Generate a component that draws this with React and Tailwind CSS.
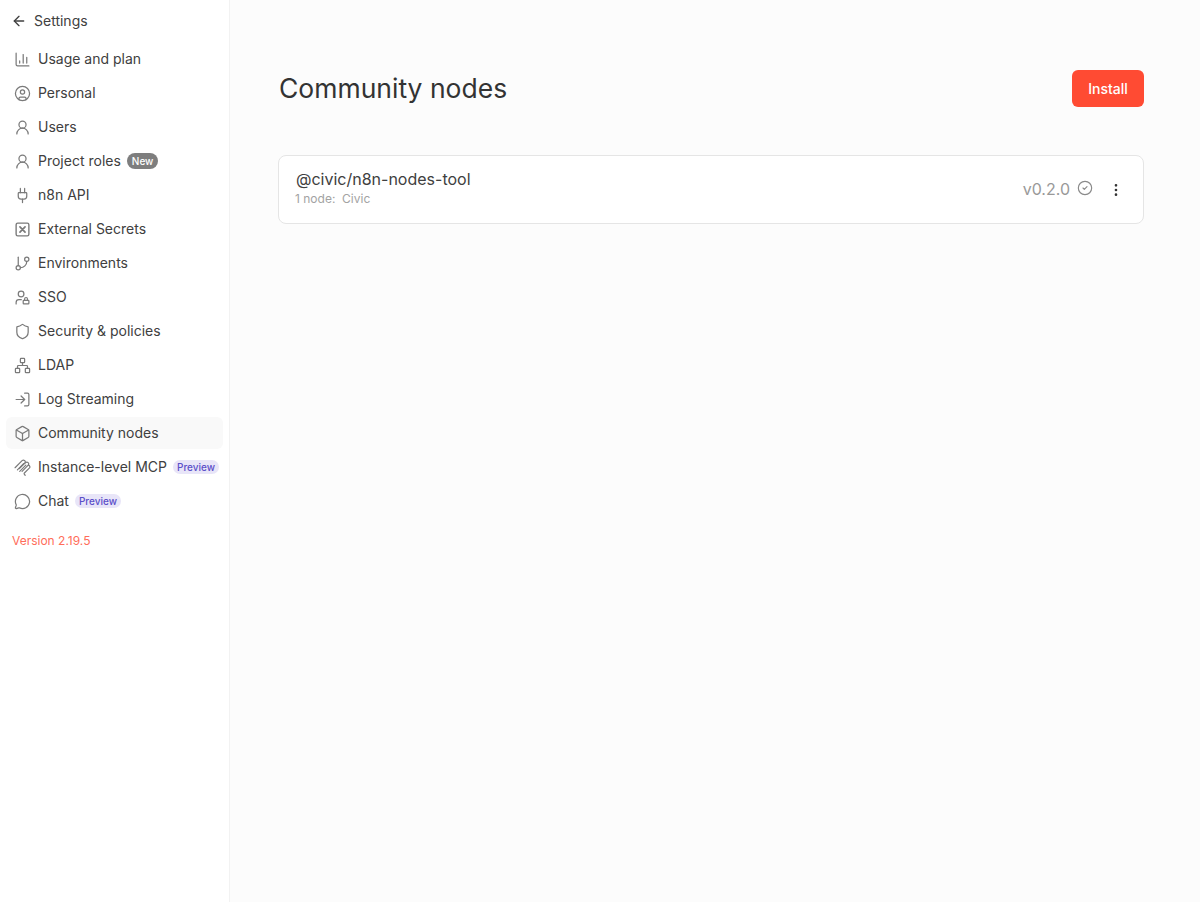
import {
  ArrowLeft,
  ChartColumn,
  CircleUser,
  UserRound,
  Plug,
  GitBranch,
  UserLock,
  Shield,
  Network,
  LogIn,
  Box,
  MessageCircle,
  CircleCheck,
  EllipsisVertical,
} from "lucide-react";

function McpIcon(props) {
  return (
    <svg viewBox="0 0 16 16" fill="none" stroke="currentColor" strokeWidth="1.1" strokeLinecap="round" strokeLinejoin="round" className={props.className}>
      <path d="M1 8.2 7.6 1.6a1.7 1.7 0 0 1 2.5 2.4L5 9.1" />
      <path d="M10.1 4 11 3.4a1.7 1.7 0 0 1 2.4 2.4L7.6 11.6" />
      <path d="M13.4 5.8a1.6 1.6 0 0 1 1.2 2.6L9.8 13.2a.9.9 0 0 0 0 1.3l.7.8" />
      <path d="M3.2 10.2 9 4.4M5.4 11.6l5.8-5.8" />
    </svg>
  );
}

function SecretsIcon(props) {
  return (
    <svg viewBox="0 0 16 16" fill="none" stroke="currentColor" strokeLinecap="round" className={props.className}>
      <rect x="2" y="2" width="12" height="12" rx="1.5" strokeWidth="1.3" />
      <path d="M5.6 5.6l4.8 4.8M10.4 5.6l-4.8 4.8" strokeWidth="1.6" />
    </svg>
  );
}

const items = [
  { label: "Usage and plan", icon: ChartColumn },
  { label: "Personal", icon: CircleUser },
  { label: "Users", icon: UserRound },
  { label: "Project roles", icon: UserRound, badge: "New" },
  { label: "n8n API", icon: Plug },
  { label: "External Secrets", icon: SecretsIcon },
  { label: "Environments", icon: GitBranch },
  { label: "SSO", icon: UserLock },
  { label: "Security & policies", icon: Shield },
  { label: "LDAP", icon: Network },
  { label: "Log Streaming", icon: LogIn },
  { label: "Community nodes", icon: Box, active: true },
  { label: "Instance-level MCP", icon: McpIcon, preview: true },
  { label: "Chat", icon: MessageCircle, preview: true },
];

function NavItem({ item }) {
  const Icon = item.icon;
  return (
    <div
      className={
        "flex h-8 items-center rounded-md pl-2 " +
        (item.active ? "bg-[#f9f9f9]" : "")
      }
    >
      <Icon className="h-[17px] w-[17px] shrink-0 text-[#7a7a7a]" strokeWidth={1.75} />
      <span className="ml-[7px] text-sm text-[#404040]">{item.label}</span>
      {item.badge && (
        <span className="ml-1.5 flex h-4 items-center rounded-full bg-[#7e7e7e] px-[5px] text-[10px] font-medium text-white">
          {item.badge}
        </span>
      )}
      {item.preview && (
        <span className="ml-1.5 flex h-3.5 items-center rounded-full bg-[#e8e5f8] px-1 text-[10px] font-medium text-[#5b4fc9]">
          Preview
        </span>
      )}
    </div>
  );
}

export default function App() {
  return (
    <div className="flex h-[902px] w-[1200px] overflow-hidden bg-[#fcfcfc] font-['Inter',sans-serif]">
      <aside className="flex w-[230px] shrink-0 flex-col border-r border-[#f2f2f2] bg-white px-1.5">
        <div className="flex h-[43px] items-center pb-[2px] pl-[5px]">
          <ArrowLeft className="h-4 w-4 text-[#404040]" strokeWidth={2} />
          <span className="ml-[7px] text-sm text-[#404040]">Settings</span>
        </div>
        <nav className="flex flex-col gap-0.5">
          {items.map((item) => (
            <NavItem key={item.label} item={item} />
          ))}
        </nav>
        <p className="mt-4 pl-1.5 text-xs text-[#ff6d5a]">Version 2.19.5</p>
      </aside>

      <main className="flex-1 pl-12 pr-14 pt-[70px]">
        <div className="flex h-[37px] items-center justify-between">
          <h1 className="text-[26.5px] pl-px font-normal text-[#333333]">Community nodes</h1>
          <button
            type="button"
            className="flex h-[37px] w-[72px] items-center justify-center rounded-md bg-[#ff4b33] text-sm font-medium text-white"
          >
            Install
          </button>
        </div>

        <div className="mt-12 flex h-[69px] items-center justify-between rounded-lg border border-[#e5e5e5] bg-white pl-4 pr-[19px]">
          <div className="-mt-1">
            <div className="pl-px text-base leading-5 font-normal text-[#404040]">@civic/n8n-nodes-tool</div>
            <div className="mt-0.5 text-xs text-[#a3a3a3]">1 node:&nbsp; Civic</div>
          </div>
          <div className="-mt-0.5 flex items-center">
            <span className="text-base text-[#999999]">v0.2.0</span>
            <CircleCheck className="ml-[7px] h-4 w-4 -translate-y-px text-[#8a8a8a]" strokeWidth={1.75} />
            <EllipsisVertical className="ml-[15px] h-4 w-4 translate-y-px text-[#333333]" strokeWidth={2} />
          </div>
        </div>
      </main>
    </div>
  );
}
